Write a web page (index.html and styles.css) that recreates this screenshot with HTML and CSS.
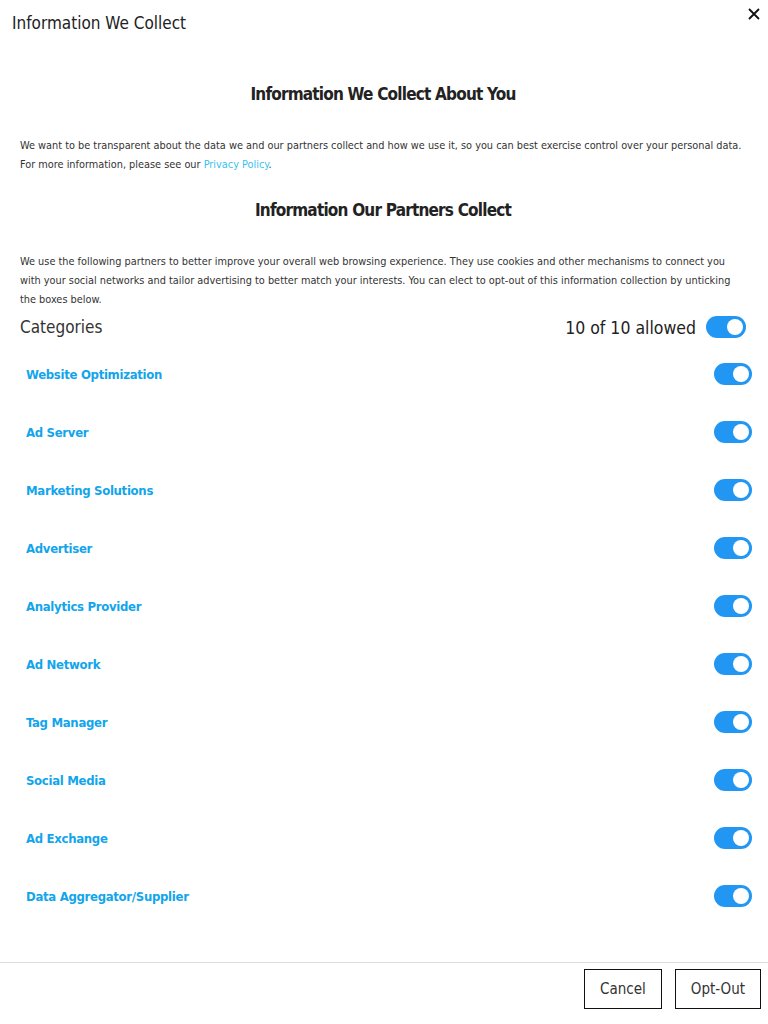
FILE: index.html
```html
<!DOCTYPE html>
<html lang="en">
<head>
<meta charset="utf-8">
<title>Information We Collect</title>
<link rel="stylesheet" href="styles.css">
</head>
<body>
<div class="modal">
  <header class="top">
    <div class="top-title">Information We Collect</div>
    <button class="close" aria-label="Close">
      <svg width="12" height="12" viewBox="0 0 12 12"><path d="M1 1 L11 11 M11 1 L1 11" stroke="#111" stroke-width="1.8" fill="none"/></svg>
    </button>
  </header>
  <main class="content">
    <h2 class="heading first">Information We Collect About You</h2>
    <p class="text">We want to be transparent about the data we and our partners collect and how we use it, so you can best exercise control over your personal data. For more information, please see our <a class="link" href="#">Privacy Policy</a>.</p>
    <h2 class="heading">Information Our Partners Collect</h2>
    <p class="text">We use the following partners to better improve your overall web browsing experience. They use cookies and other mechanisms to connect you with your social networks and tailor advertising to better match your interests. You can elect to opt-out of this information collection by unticking the boxes below.</p>
    <div class="cat-head">
      <span class="cat-title">Categories</span>
      <span class="cat-right"><span class="allowed">10 of 10 allowed</span><span class="toggle"></span></span>
    </div>
    <ul class="rows">
      <li class="row"><span class="label">Website Optimization</span><span class="toggle"></span></li>
      <li class="row"><span class="label">Ad Server</span><span class="toggle"></span></li>
      <li class="row"><span class="label">Marketing Solutions</span><span class="toggle"></span></li>
      <li class="row"><span class="label">Advertiser</span><span class="toggle"></span></li>
      <li class="row"><span class="label">Analytics Provider</span><span class="toggle"></span></li>
      <li class="row"><span class="label">Ad Network</span><span class="toggle"></span></li>
      <li class="row"><span class="label">Tag Manager</span><span class="toggle"></span></li>
      <li class="row"><span class="label">Social Media</span><span class="toggle"></span></li>
      <li class="row"><span class="label">Ad Exchange</span><span class="toggle"></span></li>
      <li class="row"><span class="label">Data Aggregator/Supplier</span><span class="toggle"></span></li>
    </ul>
  </main>
  <footer class="footer">
    <button class="btn">Cancel</button>
    <button class="btn">Opt-Out</button>
  </footer>
</div>
</body>
</html>
```

FILE: styles.css
```css
* { box-sizing: border-box; }
body {
  margin: 0;
  background: #fff;
  font-family: "DejaVu Sans Condensed", "Liberation Sans Narrow", "Roboto", sans-serif;
  color: #333;
}
.modal { width: 768px; }
.top {
  height: 46px;
  display: flex;
  align-items: center;
  justify-content: space-between;
  padding: 0 8px 0 12px;
}
.top-title {
  font-size: 17px;
  color: #222;
}
.close {
  background: none;
  border: 0;
  padding: 0;
  width: 12px;
  height: 12px;
  margin-top: -18px;
  display: flex;
}
.content { padding: 0 22px 0 20px; }
.heading {
  margin: 24px 0 0;
  font-size: 17px;
  line-height: 24px;
  font-weight: 900;
  letter-spacing: -0.8px;
  text-align: center;
  color: #222;
}
.heading.first { margin-top: 36px; }
.text {
  margin: 30px 0 0;
  font-size: 10.85px;
  line-height: 19px;
  color: #333;
}
.link { color: #3bbfef; text-decoration: none; }
.cat-head {
  margin-top: 7px;
  height: 22px;
  display: flex;
  align-items: center;
  justify-content: space-between;
}
.cat-title { font-size: 17px; color: #333; }
.cat-right { display: flex; align-items: center; gap: 10px; }
.allowed { font-size: 17.5px; color: #222; margin-top: 2px; }
.toggle {
  position: relative;
  width: 40px;
  height: 22px;
  border-radius: 11px;
  background: #2196f3;
  display: inline-block;
}
.toggle::after {
  content: "";
  position: absolute;
  right: 3px;
  top: 3px;
  width: 16px;
  height: 16px;
  border-radius: 50%;
  background: #fff;
}
.rows {
  list-style: none;
  margin: 5px -6px 39px 6px;
  padding: 0;
}
.row {
  height: 58px;
  display: flex;
  align-items: center;
  justify-content: space-between;
}
.row .toggle { width: 38px; margin-top: 4px; }
.label {
  font-size: 13px;
  font-weight: bold;
  letter-spacing: -0.3px;
  color: #12a5ec;
  margin-top: 4px;
}
.footer {
  border-top: 1px solid #ddd;
  display: flex;
  justify-content: flex-end;
  gap: 13px;
  padding: 6px 7px 0 0;
}
.btn {
  height: 40px;
  padding: 0 15px;
  background: #fff;
  border: 1px solid #111;
  font-family: inherit;
  font-size: 15px;
  color: #333;
}
```
